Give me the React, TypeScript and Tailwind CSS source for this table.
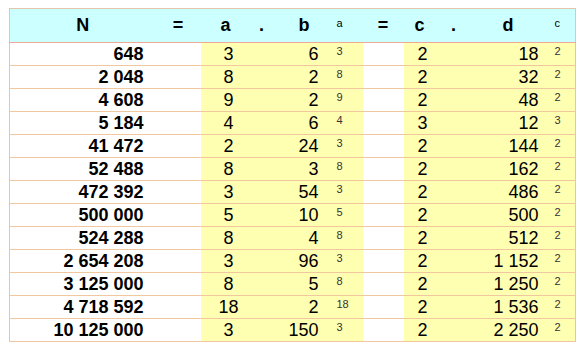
const rows: [string, string, string, string, string, string, string][] = [
  ["648", "3", "6", "3", "2", "18", "2"],
  ["2 048", "8", "2", "8", "2", "32", "2"],
  ["4 608", "9", "2", "9", "2", "48", "2"],
  ["5 184", "4", "6", "4", "3", "12", "3"],
  ["41 472", "2", "24", "3", "2", "144", "2"],
  ["52 488", "8", "3", "8", "2", "162", "2"],
  ["472 392", "3", "54", "3", "2", "486", "2"],
  ["500 000", "5", "10", "5", "2", "500", "2"],
  ["524 288", "8", "4", "8", "2", "512", "2"],
  ["2 654 208", "3", "96", "3", "2", "1 152", "2"],
  ["3 125 000", "8", "5", "8", "2", "1 250", "2"],
  ["4 718 592", "18", "2", "18", "2", "1 536", "2"],
  ["10 125 000", "3", "150", "3", "2", "2 250", "2"],
];

const widths = [146, 45, 50, 22, 52, 38, 41, 38, 24, 78, 32];

export default function App() {
  return (
    <div className="min-h-screen bg-white pl-[9px] pt-[8px] font-['Liberation_Sans',Arial,sans-serif] text-black">
      <table className="table-fixed border-collapse border border-[#e6c4ac] w-[566px]">
        <colgroup>
          {widths.map((w, i) => (
            <col key={i} style={{ width: w }} />
          ))}
        </colgroup>
        <thead>
          <tr className="h-[34px] bg-[#ccffff] border-b border-[#f0a898] text-[18px] font-bold">
            <th className="text-center">N</th>
            <th className="text-center">=</th>
            <th className="text-center">a</th>
            <th className="text-center">.</th>
            <th className="text-right pr-[15px]">b</th>
            <th className="text-left align-top pl-[12px] pt-[8px] text-[11px] leading-[13px] font-normal">a</th>
            <th className="text-center">=</th>
            <th className="text-center pr-[6px]">c</th>
            <th className="text-center">.</th>
            <th className="text-right pr-[30px]">d</th>
            <th className="text-left align-top pl-[11px] pt-[8px] text-[11px] leading-[13px] font-normal">c</th>
          </tr>
        </thead>
        <tbody>
          {rows.map((r, i) => (
            <tr key={i} className="h-[23px] border-b border-[#f0c8a0] text-[18px] leading-[22px]">
              <td className="bg-white text-right pr-[12px] font-bold">{r[0]}</td>
              <td className="bg-white" />
              <td className="bg-[#ffffb2] text-center pl-[6px]">{r[1]}</td>
              <td className="bg-[#ffffb2]" />
              <td className="bg-[#ffffb2] text-right pr-[6px]">{r[2]}</td>
              <td className="bg-[#ffffb2] text-left align-top pl-[12px] pt-[2px] text-[11px] leading-[13px] text-[#333]">{r[3]}</td>
              <td className="bg-white" />
              <td className="bg-[#ffffb2] text-center">{r[4]}</td>
              <td className="bg-[#ffffb2]" />
              <td className="bg-[#ffffb2] text-right pr-[5px]">{r[5]}</td>
              <td className="bg-[#ffffb2] text-left align-top pl-[11px] pt-[2px] text-[11px] leading-[13px] text-[#333]">{r[6]}</td>
            </tr>
          ))}
        </tbody>
      </table>
    </div>
  );
}
